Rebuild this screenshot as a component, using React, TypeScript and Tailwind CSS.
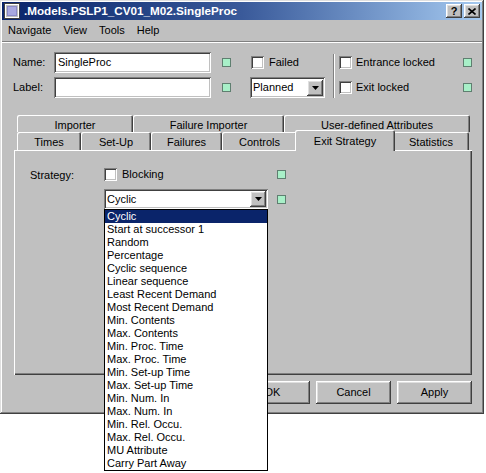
import type { ReactNode } from "react";

const raised =
  "shadow-[inset_-1px_-1px_0_#404040,inset_1px_1px_0_#ffffff,inset_-2px_-2px_0_#808080,inset_2px_2px_0_#dfdfdf]";
const sunken =
  "shadow-[inset_1px_1px_0_#808080,inset_-1px_-1px_0_#ffffff,inset_2px_2px_0_#404040,inset_-2px_-2px_0_#c0c0c0]";
const tabEdge = "shadow-[inset_1px_1px_0_#ffffff,inset_-1px_0_0_#404040,inset_-2px_0_0_#808080]";

const strategies = [
  "Cyclic",
  "Start at successor 1",
  "Random",
  "Percentage",
  "Cyclic sequence",
  "Linear sequence",
  "Least Recent Demand",
  "Most Recent Demand",
  "Min. Contents",
  "Max. Contents",
  "Min. Proc. Time",
  "Max. Proc. Time",
  "Min. Set-up Time",
  "Max. Set-up Time",
  "Min. Num. In",
  "Max. Num. In",
  "Min. Rel. Occu.",
  "Max. Rel. Occu.",
  "MU Attribute",
  "Carry Part Away",
];

function Led() {
  return <div className="h-[9px] w-[9px] shrink-0 border border-[#5f7f70] bg-[#a8f0c8]" />;
}

function Check() {
  return <div className={`h-[13px] w-[13px] shrink-0 bg-white ${sunken}`} />;
}

function Arrow() {
  return (
    <div className={`flex h-[16px] w-[16px] items-center justify-center bg-[#c0c0c0] ${raised}`}>
      <svg width="7" height="4" viewBox="0 0 7 4">
        <path d="M0 0h7L3.5 4z" fill="#000" />
      </svg>
    </div>
  );
}

function Combo({ value, width }: { value: string; width: string }) {
  return (
    <div className={`flex h-[20px] items-center justify-between bg-white pl-[3px] pr-[2px] ${width} ${sunken}`}>
      <span className="leading-none">{value}</span>
      <Arrow />
    </div>
  );
}

function Tab({ label, width, active }: { label: string; width: string; active?: boolean }) {
  if (active) {
    return (
      <div
        className={`relative z-10 -mx-[2px] mb-[-1px] flex h-[21px] shrink-0 items-start justify-center rounded-t-[2px] bg-[#c0c0c0] pt-[3px] ${width} ${tabEdge}`}
      >
        {label}
      </div>
    );
  }
  return (
    <div
      className={`flex h-full shrink-0 items-center justify-center rounded-t-[2px] bg-[#c0c0c0] pt-[3px] ${width} ${tabEdge}`}
    >
      {label}
    </div>
  );
}

function Button({ children }: { children: ReactNode }) {
  return (
    <div className={`flex h-[23px] w-[75px] items-center justify-center bg-[#c0c0c0] ${raised}`}>
      {children}
    </div>
  );
}

function TitleIcon() {
  return (
    <svg width="16" height="16" viewBox="0 0 16 16">
      <rect x="0.5" y="0.5" width="15" height="15" fill="#c0c0c0" stroke="#404040" />
      <rect x="1.5" y="1.5" width="13" height="13" fill="none" stroke="#ffffff" />
      <rect x="3" y="3" width="10" height="10" fill="#8a8ac8" />
      <rect x="4" y="4" width="8" height="8" fill="#a8a8e0" />
    </svg>
  );
}

export default function App() {
  return (
    <div className="relative h-[473px] w-[486px] overflow-hidden bg-white font-['Liberation_Sans',Arial,sans-serif] text-[11px] text-black">
      <div className="h-[414px] w-[484px] bg-[#c0c0c0] pt-[2px] shadow-[inset_-1px_-1px_0_#404040,inset_1px_1px_0_#dfdfdf,inset_-2px_-2px_0_#808080,inset_2px_2px_0_#ffffff]">
        {/* title bar */}
        <div className="mx-[2px] flex h-[18px] items-center bg-linear-to-r from-[#0a246a] via-[#3a5a9a] to-[#a6caf0] px-[2px]">
          <TitleIcon />
          <span className="ml-[4px] text-[11.7px] font-bold text-white">.Models.PSLP1_CV01_M02.SingleProc</span>
          <div className="ml-auto flex items-center gap-[2px]">
            <div className={`flex h-[14px] w-[16px] items-center justify-center bg-[#c0c0c0] text-[11px] font-bold leading-none ${raised}`}>
              ?
            </div>
            <div className={`flex h-[14px] w-[16px] items-center justify-center bg-[#c0c0c0] ${raised}`}>
              <svg width="8" height="7" viewBox="0 0 8 7">
                <path d="M0.5 0.5L7.5 6.5M7.5 0.5L0.5 6.5" stroke="#000" strokeWidth="1.6" />
              </svg>
            </div>
          </div>
        </div>

        {/* menu bar */}
        <div className="mx-[2px] flex h-[20px] items-center">
          {["Navigate", "View", "Tools", "Help"].map((m) => (
            <span key={m} className="px-[6px]">
              {m}
            </span>
          ))}
        </div>
        <div className="mx-[2px] mt-[1px] h-px bg-[#808080]" />
        <div className="mx-[2px] h-px bg-white" />

        {/* header fields */}
        <div className="mt-[9px] flex items-start pl-[13px]">
          <div className="flex flex-col gap-[4px]">
            {["Name:", "Label:"].map((label, i) => (
              <div key={label} className="flex h-[21px] items-center">
                <span className="w-[41px]">{label}</span>
                <div className={`flex h-[21px] w-[157px] items-center bg-white px-[4px] ${sunken}`}>
                  {i === 0 ? "SingleProc" : ""}
                </div>
                <div className="ml-[11px]">
                  <Led />
                </div>
              </div>
            ))}
          </div>
          <div className="ml-[19px] flex flex-col gap-[4px]">
            <div className="flex h-[21px] items-center pl-[1px]">
              <Check />
              <span className="ml-[5px]">Failed</span>
            </div>
            <Combo value="Planned" width="w-[75px] h-[21px]" />
          </div>
          <div className="ml-[8px] mt-[2px] h-[44px] w-[2px] border-l border-r border-l-[#808080] border-r-white" />
          <div className="ml-[4px] flex w-[133px] flex-col gap-[4px]">
            {["Entrance locked", "Exit locked"].map((t) => (
              <div key={t} className="flex h-[21px] items-center">
                <Check />
                <span className="ml-[4px]">{t}</span>
                <div className="ml-auto">
                  <Led />
                </div>
              </div>
            ))}
          </div>
        </div>

        {/* tabs */}
        <div className="mt-[17px] pl-[17px]">
          <div className="flex h-[17px]">
            <Tab label="Importer" width="w-[116px]" />
            <Tab label="Failure Importer" width="w-[151px]" />
            <Tab label="User-defined Attributes" width="w-[186px]" />
          </div>
          <div className="flex h-[18px] items-end">
            <Tab label="Times" width="w-[64px]" />
            <Tab label="Set-Up" width="w-[70px]" />
            <Tab label="Failures" width="w-[71px]" />
            <Tab label="Controls" width="w-[75px]" />
            <Tab label="Exit Strategy" width="w-[100px]" active />
            <Tab label="Statistics" width="w-[76px]" />
          </div>
        </div>

        {/* panel */}
        <div className="ml-[14px] h-[225px] w-[458px] pt-[18px] shadow-[inset_1px_1px_0_#ffffff,inset_-1px_-1px_0_#404040,inset_-2px_-2px_0_#808080]">
          <div className="flex h-[13px] items-center">
            <span className="w-[90px] pl-[16px] pt-[1px]">Strategy:</span>
            <div className="flex w-[173px] items-center">
              <Check />
              <span className="ml-[5px]">Blocking</span>
            </div>
            <Led />
          </div>
          <div className="mt-[8px] flex items-center pl-[90px]">
            <Combo value="Cyclic" width="w-[164px]" />
            <div className="ml-[9px]">
              <Led />
            </div>
          </div>
        </div>

        {/* buttons */}
        <div className="mt-[6px] flex justify-end gap-[6px] pr-[12px]">
          <Button>OK</Button>
          <Button>Cancel</Button>
          <Button>Apply</Button>
        </div>
      </div>

      {/* open drop-down list */}
      <div className="absolute left-[104px] top-[209px] z-20 w-[164px] border border-black bg-white">
        {strategies.map((s, i) => (
          <div
            key={s}
            className={`h-[13px] whitespace-nowrap pl-[2px] leading-[13px] ${i === 0 ? "bg-[#0a246a] text-white" : ""}`}
          >
            {s}
          </div>
        ))}
      </div>
    </div>
  );
}
